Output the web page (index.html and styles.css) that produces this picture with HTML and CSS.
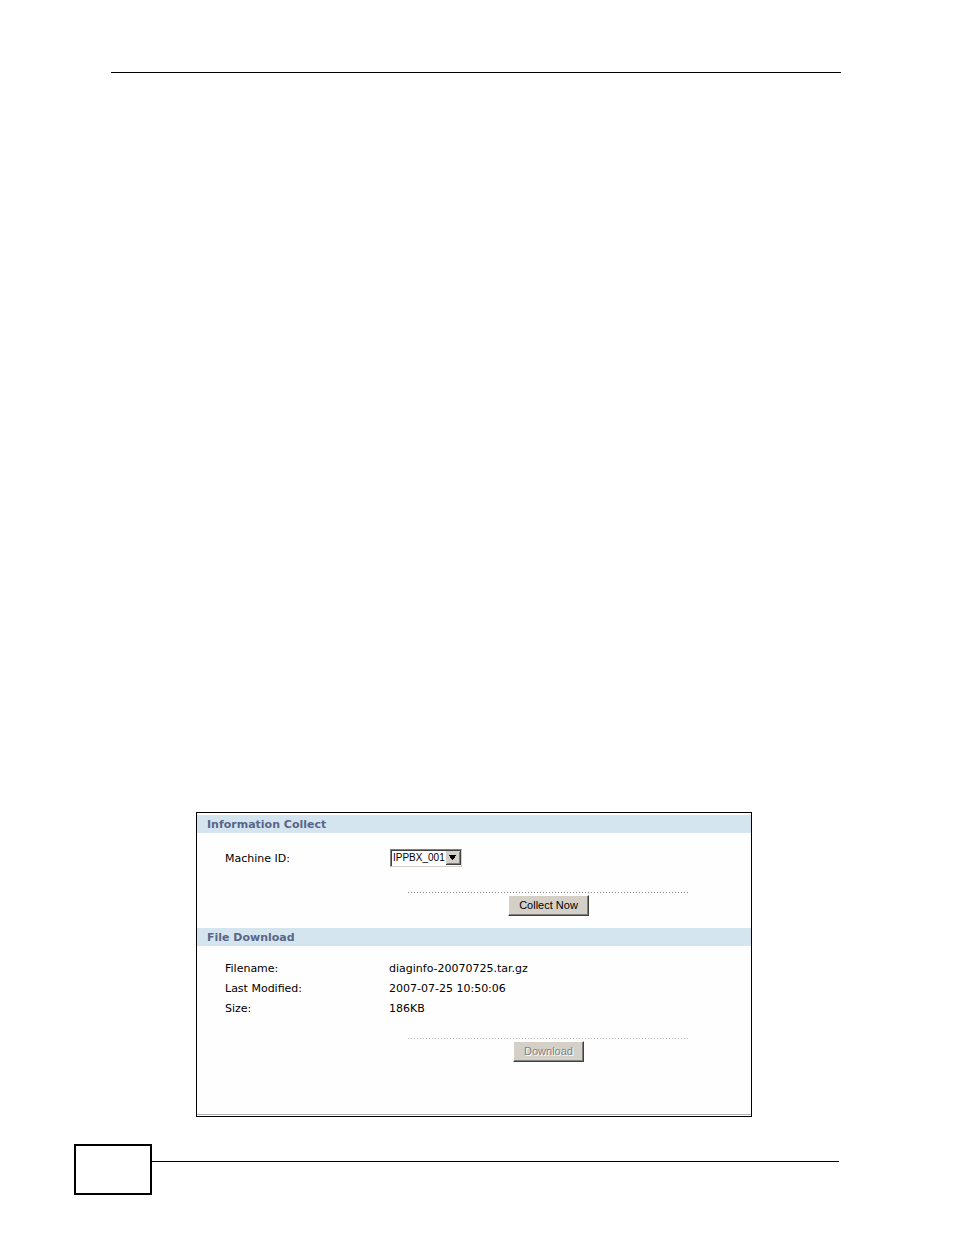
FILE: index.html
```html
<!DOCTYPE html>
<html lang="en">
<head>
<meta charset="utf-8">
<meta name="viewport" content="width=device-width, initial-scale=1">
<title>Diagnostics</title>
<link rel="stylesheet" href="styles.css">
</head>
<body>
<div class="page">
  <header class="page-header"></header>
  <main class="panel">
    <section>
      <h2 class="band">Information Collect</h2>
      <form class="fields">
        <label class="name" for="machine">Machine ID:</label>
        <div class="picker">
          <select id="machine" class="picker-select">
            <option>IPPBX_001</option>
          </select>
          <svg class="picker-arrow" viewBox="0 0 15 14" shape-rendering="crispEdges" aria-hidden="true">
            <path fill="#d4d0c8" d="M0 0h15v14H0z"/>
            <path fill="#808080" d="M13 1h1v12H1v-1h12z"/>
            <path fill="#404040" d="M14 0h1v14H0v-1h14z"/>
            <path fill="#000" d="M3 4h7v1H3zM4 5h5v1H4zM4 6h5v1H4zM5 7h3v1H5zM6 8h1v1H6z"/>
          </svg>
        </div>
      </form>
      <div class="actions">
        <button type="button" class="button">Collect Now</button>
      </div>
    </section>
    <section>
      <h2 class="band">File Download</h2>
      <dl class="fields">
        <dt class="name">Filename:</dt><dd class="value">diaginfo-20070725.tar.gz</dd>
        <dt class="name">Last Modified:</dt><dd class="value">2007-07-25 10:50:06</dd>
        <dt class="name">Size:</dt><dd class="value">186KB</dd>
      </dl>
      <div class="actions actions-light">
        <button type="button" class="button" disabled>Download</button>
      </div>
    </section>
    <div class="panel-foot"></div>
  </main>
  <footer class="page-footer">
    <div class="page-number"></div>
    <div class="footer-rule"></div>
  </footer>
</div>
</body>
</html>
```
FILE: styles.css
```css
* {
  box-sizing: border-box;
}

body {
  margin: 0;
  background: #fff;
  color: #000;
  font: 11px/18px "DejaVu Sans", Verdana, sans-serif;
}

.page {
  display: flex;
  flex-direction: column;
  min-height: 100vh;
  padding: 72px 113px 40px 74px;
}

.page-header {
  flex: 1;
  margin-left: 37px;
  border-top: 1px solid #000;
}

.panel {
  margin: 0 89px 27px 122px;
  padding-top: 2px;
  border: 1px solid #000;
  background: #fefefe;
}

.band {
  margin: 0;
  padding: 2px 0 0 10px;
  background: #d4e5f0;
  color: #5a6688;
  font-size: 11px;
  line-height: 16px;
}

.fields {
  display: grid;
  grid-template-columns: 164px 1fr;
  grid-auto-rows: 20px;
  align-items: center;
  margin: 0;
  padding: 12px 28px 20px;
}

form.fields {
  padding-top: 15px;
  padding-bottom: 24px;
}

.name,
.value {
  margin: 0;
  padding-top: 2px;
}

.picker {
  position: relative;
  width: 72px;
  height: 18px;
  margin-left: 1px;
}

.picker-select {
  appearance: none;
  display: block;
  width: 100%;
  height: 100%;
  padding: 0 16px 0 2px;
  border: 1px solid;
  border-color: #808080 #d4d0c8 #d4d0c8 #808080;
  border-radius: 0;
  background: #fff;
  box-shadow: inset 1px 1px #404040;
  color: #000;
  font: 10px/16px "Liberation Sans", Arial, sans-serif;
}

.picker-arrow {
  position: absolute;
  top: 2px;
  right: 1px;
  width: 15px;
  height: 14px;
  pointer-events: none;
}

.actions {
  width: 281px;
  margin: 0 auto 12px 211px;
  padding-top: 3px;
  background: repeating-linear-gradient(90deg, #8a8a8a 0 1px, #fefefe 1px 3px) top / 100% 1px no-repeat;
}

.actions-light {
  margin-bottom: 52px;
  background-image: repeating-linear-gradient(90deg, #b4b4b4 0 1px, #fefefe 1px 3px);
}

.button {
  display: block;
  height: 21px;
  margin: 0 auto;
  padding: 0 10px 2px;
  border: 1px solid;
  border-color: #fff #404040 #404040 #fff;
  border-radius: 0;
  background: #d4d0c8;
  box-shadow: inset -1px -1px #808080;
  color: #000;
  font: 11px/16px "Liberation Sans", Arial, sans-serif;
}

.button:disabled {
  color: #808080;
  text-shadow: 1px 1px #fff;
}

.panel-foot {
  height: 2px;
  border-top: 1px solid #b4afb8;
}

.page-footer {
  display: flex;
}

.page-number {
  width: 78px;
  height: 51px;
  border: 2px solid #000;
}

.footer-rule {
  flex: 1;
  margin: 17px 2px 0 0;
  border-top: 1px solid #000;
}
```
